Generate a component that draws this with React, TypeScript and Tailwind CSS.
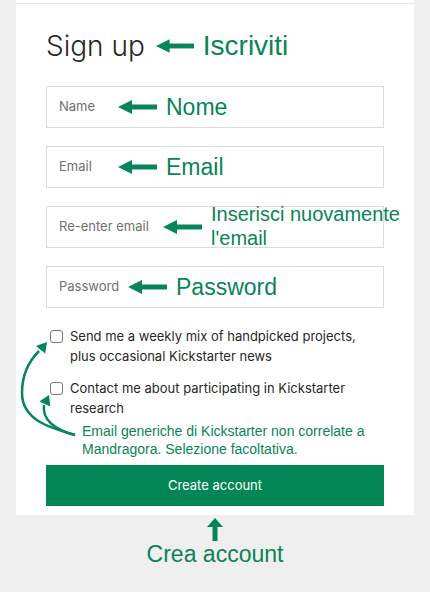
import type { ReactNode } from 'react'

const GREEN = '#06855a'

function LeftArrow() {
  return (
    <svg width="39" height="14" viewBox="0 0 39 14" className="shrink-0">
      <polygon points="0,7 14,0 14,14" fill={GREEN} />
      <rect x="13" y="4.5" width="26" height="5" fill={GREEN} />
    </svg>
  )
}

function Field({ placeholder, padW, note }: { placeholder: string; padW: string; note: ReactNode }) {
  return (
    <div className="flex h-[42px] items-center border border-[#dcdcdc] pl-[12px]">
      <span className={`${padW} shrink-0 text-[13px] text-[#6f6f6f]`}>{placeholder}</span>
      <LeftArrow />
      <div className="ml-[9px] whitespace-nowrap font-['Liberation_Sans',sans-serif] text-[#0a8456]">{note}</div>
    </div>
  )
}

function Check({ children }: { children: ReactNode }) {
  return (
    <label className="flex items-start gap-[7px] pl-[4px]">
      <span className="mt-[4px] h-[13px] w-[13px] shrink-0 rounded-[3px] border border-[#767676] bg-white" />
      <span className="text-[13px] leading-[20px] text-[#282828]">{children}</span>
    </label>
  )
}

export default function App() {
  return (
    <div className="min-h-[592px] bg-[#efefef] font-['Inter',sans-serif]">
      <div className="mx-[16px] bg-white pt-[3px] pb-[9px]">
        <div className="border-t border-[#ebe8e4] px-[30px]">
          <div className="mt-[24px] flex items-center">
            <h1 className="text-[28px] leading-[36px] font-light text-[#282828]">Sign up</h1>
            <svg width="38" height="14" viewBox="0 0 39 14" className="ml-[11px] mt-[-1px]">
              <polygon points="0,7 14,0 14,14" fill={GREEN} />
              <rect x="13" y="4.5" width="26" height="5" fill={GREEN} />
            </svg>
            <span className="ml-[9px] font-['Liberation_Sans',sans-serif] text-[28px] leading-[36px] text-[#0a8456]">Iscriviti</span>
          </div>

          <div className="mt-[22px] flex flex-col gap-[18px]">
            <Field placeholder="Name" padW="w-[59px]" note={<span className="text-[23px]">Nome</span>} />
            <Field placeholder="Email" padW="w-[59px]" note={<span className="text-[23px]">Email</span>} />
            <Field
              placeholder="Re-enter email"
              padW="w-[104px]"
              note={
                <div className="mt-[-2px] text-[20px] leading-[24px]">
                  Inserisci nuovamente
                  <br />
                  l'email
                </div>
              }
            />
            <Field placeholder="Password" padW="w-[69px]" note={<span className="text-[23px]">Password</span>} />
          </div>

          <div className="relative mt-[18px] flex flex-col gap-[12px]">
            <Check>
              Send me a weekly mix of handpicked projects,
              <br />
              plus occasional Kickstarter news
            </Check>
            <Check>
              Contact me about participating in Kickstarter
              <br />
              research
            </Check>
            {/* curved annotation arrows, page coordinates via viewBox */}
            <svg
              className="absolute left-[-30px] top-0"
              width="80"
              height="120"
              viewBox="16 326 80 120"
              fill="none"
            >
              <path d="M75 435 C 50 428, 22 420, 22 393 C 22 375, 28 362, 39 351" stroke={GREEN} strokeWidth="2.5" />
              <polygon points="47,342 45.2,353.5 36,345.9" fill={GREEN} />
              <path d="M75 435 C 55 430, 42 420, 44 405" stroke={GREEN} strokeWidth="2.5" />
              <polygon points="49,395 50.3,406.6 39.3,401.6" fill={GREEN} />
            </svg>
          </div>

          <p className="mt-[4px] pl-[36px] font-['Liberation_Sans',sans-serif] text-[14px] leading-[18px] text-[#0a8456]">
            Email generiche di Kickstarter non correlate a
            <br />
            Mandragora. Selezione facoltativa.
          </p>

          <button className="mt-[7px] flex h-[41px] w-full items-center justify-center bg-[#038656] text-[13px] text-white">
            Create account
          </button>
        </div>
      </div>

      <div className="flex flex-col items-center pt-[3px]">
        <svg width="16" height="23" viewBox="0 0 16 23">
          <polygon points="8,0 16,9 0,9" fill={GREEN} />
          <rect x="5.5" y="8" width="5" height="15" fill={GREEN} />
        </svg>
        <span className="mt-[-1px] font-['Liberation_Sans',sans-serif] text-[23px] leading-[28px] text-[#0a8456]">Crea account</span>
      </div>
    </div>
  )
}
